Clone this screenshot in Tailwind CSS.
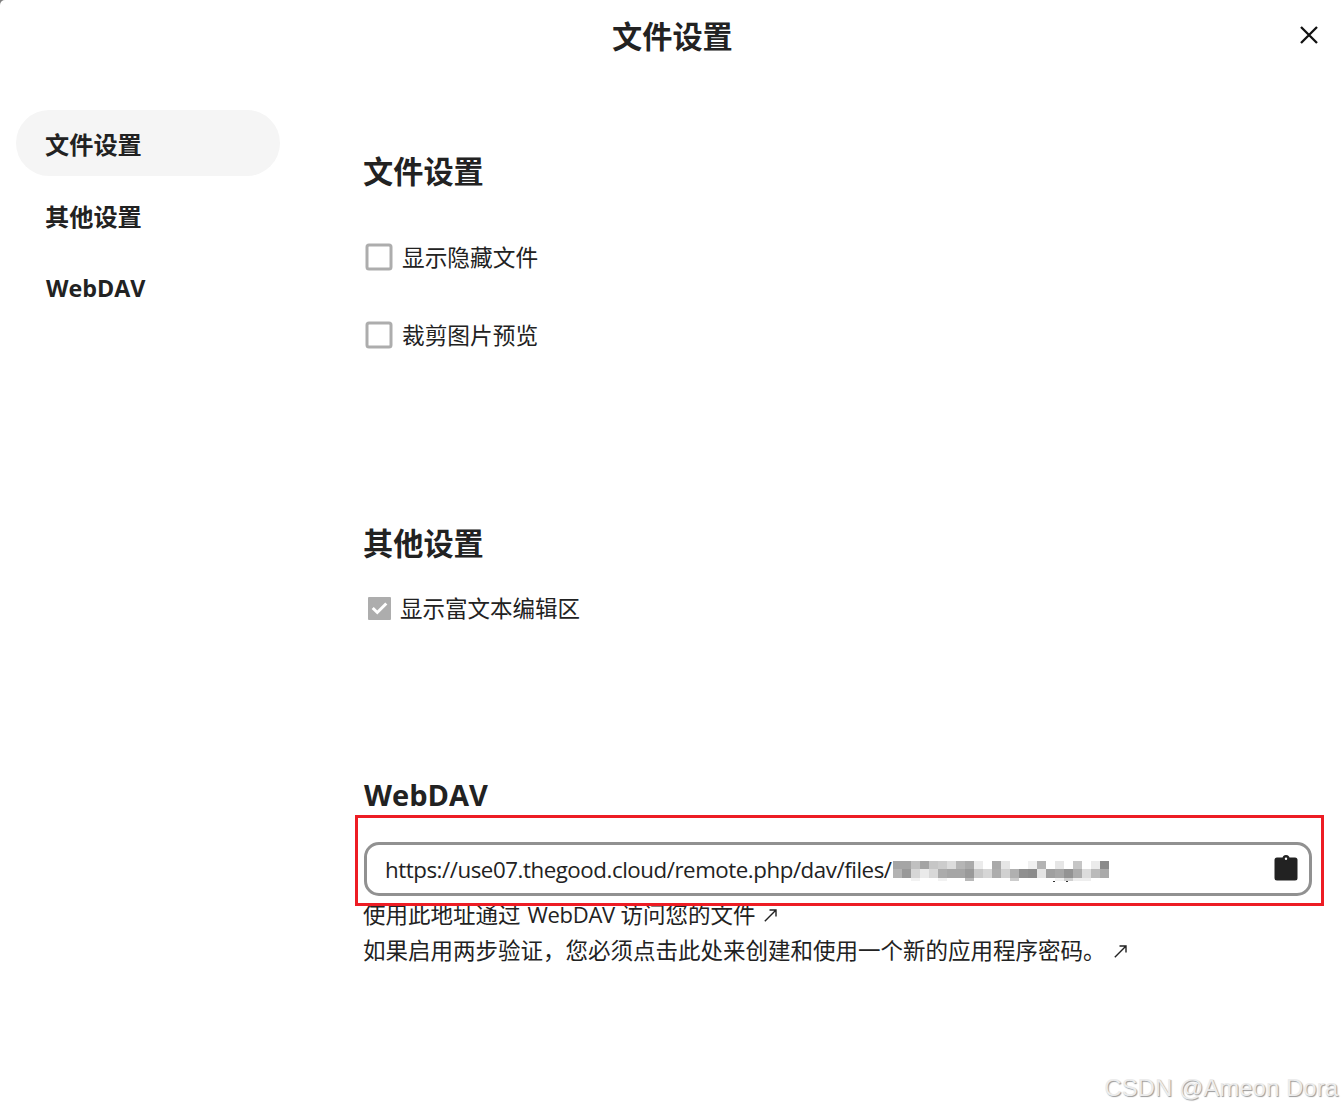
<!DOCTYPE html>
<html lang="zh-CN">
<head>
<meta charset="utf-8">
<title>文件设置</title>
<script src="https://cdn.jsdelivr.net/npm/@tailwindcss/browser@4"></script>
</head>
<body class="bg-[#808080]">
<div class="relative w-[1342px] h-[1110px] overflow-hidden rounded-tl-[5px] bg-white text-[#222] font-['Open_Sans','Noto_Sans_CJK_SC',sans-serif]">
  <header class="flex h-[74px] items-center pl-[612px] pr-[20px] justify-between">
    <h1 class="text-[30.2px] leading-[44px] font-bold">文件设置</h1>
    <svg class="mb-1 mr-1" width="18" height="18" viewBox="0 0 18 18" fill="none" stroke="#111" stroke-width="2.3"><path d="M1 1 17 17M17 1 1 17"/></svg>
  </header>
  <div class="flex">
    <nav class="flex w-[363px] flex-col gap-1.5 pt-9 pl-4 text-[24.2px] font-bold">
      <a class="flex h-[66px] w-[264px] items-center rounded-full bg-[#f5f5f5] pl-[29px] pt-[5px]">文件设置</a>
      <a class="flex h-[66px] w-[264px] items-center pl-[29px] pt-[5px]">其他设置</a>
      <a class="flex h-[66px] w-[264px] items-center pl-[30px] pt-0.5"><span class="text-[23.3px]">WebDAV</span></a>
    </nav>
    <main class="flex w-[979px] flex-col pt-[76px] text-[22.5px] leading-9">
      <section class="h-[372px]">
        <h2 class="text-[30.2px] leading-[44px] font-bold">文件设置</h2>
        <label class="mt-[46px] flex h-9 items-center gap-2.5 pl-[2px]">
          <svg class="-mt-[2px] h-[28px] w-[28px]" viewBox="0 0 28 28"><rect x="2" y="2" width="24" height="24" rx="2" fill="none" stroke="#adadad" stroke-width="3"/></svg>
          <span class="-ml-px text-[22.7px]">显示隐藏文件</span>
        </label>
        <label class="mt-[42px] flex h-9 items-center gap-2.5 pl-[2px]">
          <svg class="-mt-[2px] h-[28px] w-[28px]" viewBox="0 0 28 28"><rect x="2" y="2" width="24" height="24" rx="2" fill="none" stroke="#adadad" stroke-width="3"/></svg>
          <span class="-ml-px text-[22.7px]">裁剪图片预览</span>
        </label>
      </section>
      <section class="h-[252px]">
        <h2 class="text-[30.2px] leading-[44px] font-bold">其他设置</h2>
        <label class="mt-[25px] flex h-9 items-center gap-[9px] pl-[5px]">
          <svg class="-mt-0.5 h-[23px] w-[23px]" viewBox="0 0 23 23"><rect width="23" height="23" rx="1" fill="#adadad"/><path d="M4.7 11 9.3 15.5 18.3 6.5" fill="none" stroke="#fff" stroke-width="3"/></svg>
          <span>显示富文本编辑区</span>
        </label>
      </section>
      <section>
        <h2 class="pl-px text-[29px] leading-[41px] font-bold">WebDAV</h2>
        <div class="relative z-10 -ml-2 h-[91px] w-[969px] border-3 border-[#ed1c24] pt-6 pl-[6px]">
          <div class="flex h-[54px] w-[948px] items-center rounded-[15px] border-3 border-[#919191] pl-[18px] pr-[11px]">
            <span id="url" class="mt-0.5 whitespace-nowrap w-[508px] text-[22.3px] tracking-[-0.45px]">https://use07.thegood.cloud/remote.php/dav/files/</span>
            <svg id="mask" class="mt-0.5 h-[24px] w-[222px]" viewBox="0 0 222 24" shape-rendering="crispEdges"></svg>
            <svg class="mb-0.5 ml-auto h-[26px] w-6" viewBox="0 0 24 26"><rect x=".5" y="2.5" width="23" height="23" rx="2.5" fill="#222"/><circle cx="12" cy="3.5" r="3.5" fill="#222"/><circle cx="12" cy="3.7" r="1.2" fill="#fff"/></svg>
          </div>
        </div>
        <p class="-mt-[9px] flex h-9 items-center whitespace-pre"><span>使用此地址通过</span><span class="-mt-0.5 ml-[7px] w-[87px] text-[22px] tracking-[-0.3px]">WebDAV</span><span class="ml-[6px]">访问您的文件</span><svg class="ml-2 h-[13px] w-[13px]" viewBox="0 0 13 13" fill="none" stroke="#222" stroke-width="1.4"><path d="M.8 12.2 12 1M5.5 1H12V7.5"/></svg></p>
        <p class="flex h-9 items-center whitespace-pre"><span>如果启用两步验证，您必须点击此处来创建和使用一个新的应用程序密码。</span><svg class="ml-2 h-[13px] w-[13px]" viewBox="0 0 13 13" fill="none" stroke="#222" stroke-width="1.4"><path d="M.8 12.2 12 1M5.5 1H12V7.5"/></svg></p>
      </section>
    </main>
  </div>
  <div class="absolute right-[4px] bottom-[4px] text-[24px] leading-9 whitespace-nowrap text-[#ececec] font-['Liberation_Sans',sans-serif] [text-shadow:1px_1px_1px_#999]">CSDN @Ameon Dora</div>
</div>
<script>
// Pixelated strip hiding the account name: [y, height, grey level per 9px column]
const rows = [
  [3, 8, 'a5 a5 c0 a3 c6 cc dc b5 aa eb ff a9 e6 ff ff f0 b3 ff e6 ff c6 ff eb 8a'],
  [11, 9, 'b3 99 d6 ea d8 ab a5 a5 99 c8 d6 ac d0 b0 8f 8b e4 9f a6 93 ac dc ba aa'],
  [20, 3, 'ff ff f2 ff ff f2 ff ff b9 ff ff ff ff cc ff ff ff ff f2 d0 ee ee ff ff']
];
let cells = '';
for (const [y, h, line] of rows) line.split(' ').forEach((c, i) => { cells += `<rect x="${i * 9}" y="${y}" width="9" height="${h}" fill="#${c}${c}${c}"/>`; });
cells += '<rect x="160" y="23" width="2" height="1" fill="#333"/><rect x="173" y="23" width="2" height="1" fill="#333"/>';
document.getElementById('mask').innerHTML = cells;
</script>
</body>
</html>
